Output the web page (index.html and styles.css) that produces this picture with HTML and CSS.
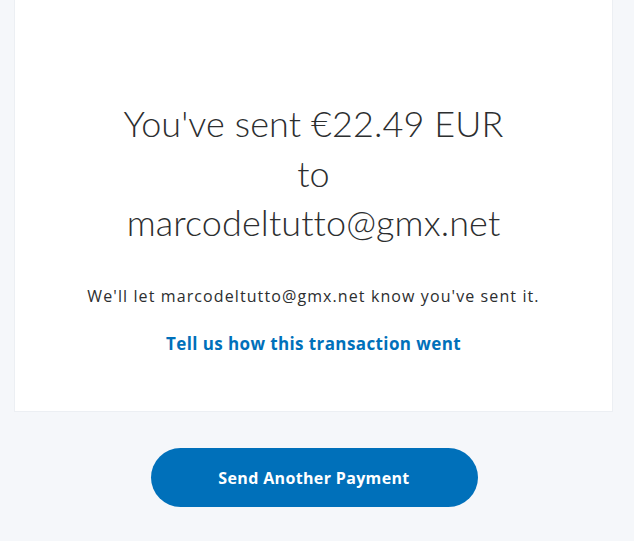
FILE: index.html
```html
<!DOCTYPE html>
<html>
<head>
<meta charset="utf-8">
<link rel="stylesheet" href="styles.css">
</head>
<body>
<div class="page">
  <div class="card">
    <h1 class="title">You've sent €22.49 EUR<br>to<br>marcodeltutto@gmx.net</h1>
    <p class="note">We'll let marcodeltutto@gmx.net know you've sent it.</p>
    <a class="link" href="#">Tell us how this transaction went</a>
  </div>
  <div class="actions">
    <button class="btn">Send Another Payment</button>
  </div>
</div>
</body>
</html>
```
FILE: styles.css
```css
html, body {
  margin: 0;
  padding: 0;
  background: #f5f7fa;
}
.page {
  padding: 0 21px 0 14px;
}
.card {
  background: #ffffff;
  border: 1px solid #eceff3;
  border-top: none;
  height: 412px;
  box-sizing: border-box;
  padding-top: 99px;
  display: flex;
  flex-direction: column;
  align-items: center;
  text-align: center;
}
.title {
  margin: 0;
  font-family: Lato, sans-serif;
  font-weight: 300;
  font-size: 36px;
  line-height: 49.5px;
  letter-spacing: 0.1px;
  color: #2c2e2f;
}
.note {
  margin: 37px 0 0;
  font-family: "Open Sans", sans-serif;
  font-size: 16px;
  line-height: 22px;
  letter-spacing: 1.1px;
  color: #2c2e2f;
}
.link {
  margin-top: 25px;
  font-family: "Open Sans", sans-serif;
  font-weight: 700;
  font-size: 17px;
  letter-spacing: 0.4px;
  color: #0070ba;
  text-decoration: none;
}
.actions {
  display: flex;
  justify-content: center;
  padding-top: 36px;
  padding-left: 1px;
}
.btn {
  width: 327px;
  height: 59px;
  border: none;
  border-radius: 30px;
  background: #0070ba;
  color: #ffffff;
  font-family: "Open Sans", sans-serif;
  font-weight: 700;
  font-size: 16px;
  letter-spacing: 0.35px;
}
```
